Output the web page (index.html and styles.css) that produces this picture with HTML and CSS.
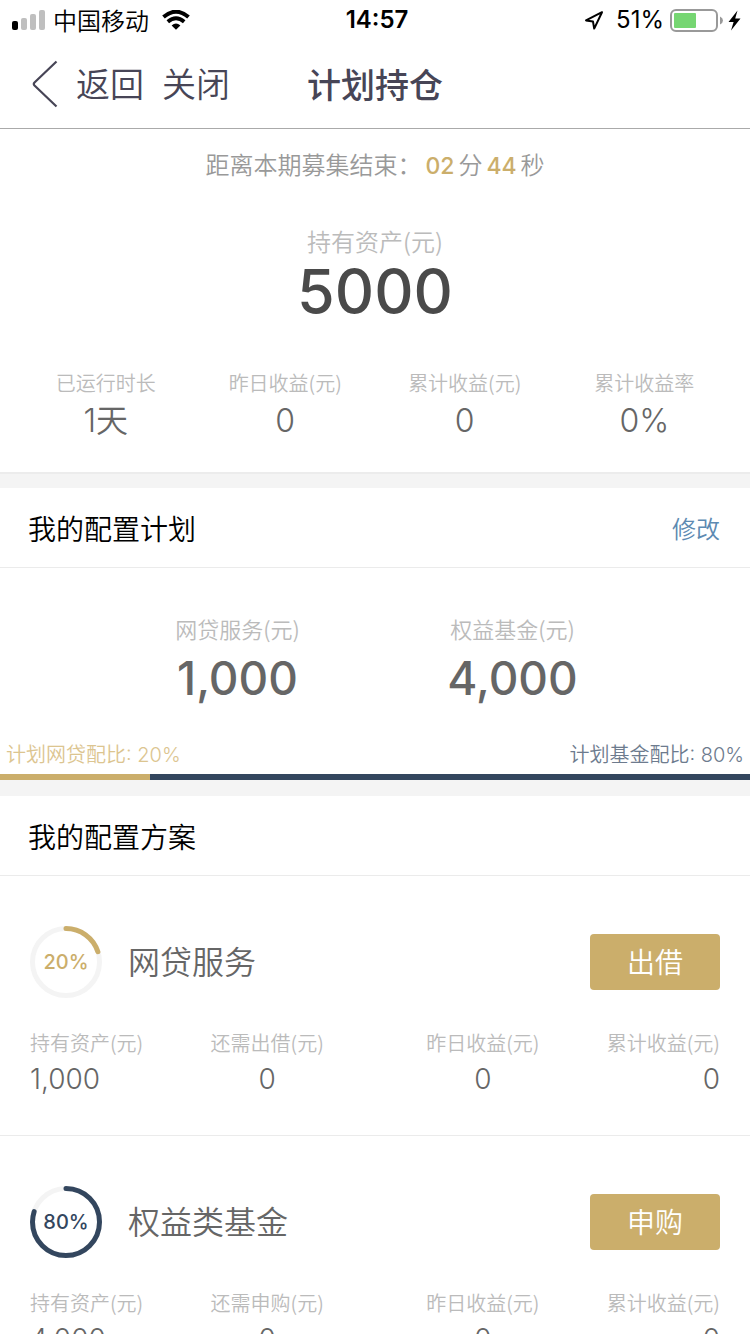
FILE: index.html
```html
<!DOCTYPE html>
<html lang="zh-CN">
<head>
<meta charset="utf-8">
<meta name="viewport" content="width=device-width, initial-scale=1">
<title>计划持仓</title>
<link rel="stylesheet" href="styles.css">
</head>
<body>
<div class="app">
  <div class="status">
    <div class="status-left">
      <svg class="signal" width="34" height="20" viewBox="0 0 34 20" aria-hidden="true">
        <rect x="0" y="11" width="6" height="9" rx="2" fill="#000"/>
        <rect x="9" y="8" width="6" height="12" rx="2" fill="#bfbfbf"/>
        <rect x="18" y="4" width="6" height="16" rx="2" fill="#bfbfbf"/>
        <rect x="27" y="0" width="6" height="20" rx="2" fill="#bfbfbf"/>
      </svg>
      <span>中国移动</span>
      <svg class="wifi" width="28" height="20" viewBox="0 0 28 20" aria-hidden="true">
        <path d="M1.500 7 Q14 -3.600 26.500 7" fill="none" stroke="#000" stroke-width="4"/>
        <path d="M5.800 11.800 Q14 4.800 22.200 11.800" fill="none" stroke="#000" stroke-width="3.800"/>
        <path d="M9.600 15.400 Q14 11.800 18.400 15.400 L14 19.800 Z" fill="#000"/>
      </svg>
    </div>
    <time class="clock">14:57</time>
    <div class="status-right">
      <svg width="20" height="20" viewBox="0 0 20 20" aria-hidden="true">
        <path d="M18 2.200 L2 10.400 L9 11.600 L10.200 18.600 Z" fill="none" stroke="#000" stroke-width="2" stroke-linejoin="round"/>
      </svg>
      <span class="percent">51%</span>
      <svg width="72" height="24" viewBox="0 0 72 24" aria-hidden="true">
        <rect x="1" y="2" width="46" height="21" rx="5" fill="none" stroke="#999" stroke-width="2"/>
        <rect x="4" y="5" width="22" height="15" rx="1" fill="#76d672"/>
        <path d="M50 8.500 Q53 10 53 12.500 Q53 15 50 16.500 Z" fill="#999"/>
        <path d="M67.500 2.500 L58.500 14 L63.600 14 L61 22.500 L70.500 10.600 L65.200 10.600 Z" fill="#000"/>
      </svg>
    </div>
  </div>

  <header class="nav">
    <div class="nav-left">
      <button class="nav-btn" type="button">
        <svg width="28" height="48" viewBox="0 0 28 48" aria-hidden="true">
          <path d="M26.500 1.500 L4.500 22.500 Q3 24 4.500 25.500 L26.500 46.500" fill="none" stroke="#474556" stroke-width="2.200"/>
        </svg>
        <span class="nav-text">返回</span>
      </button>
      <button class="nav-btn" type="button"><span class="nav-text">关闭</span></button>
    </div>
    <h1 class="nav-title">计划持仓</h1>
  </header>

  <main class="content">
    <section class="overview">
      <p class="countdown">距离本期募集结束：<b class="time">02</b>分<b class="time">44</b>秒</p>
      <p class="asset-label">持有资产(元)</p>
      <p class="asset-value">5000</p>
      <dl class="stats">
        <div class="stat"><dt>已运行时长</dt><dd>1天</dd></div>
        <div class="stat"><dt>昨日收益(元)</dt><dd>0</dd></div>
        <div class="stat"><dt>累计收益(元)</dt><dd>0</dd></div>
        <div class="stat"><dt>累计收益率</dt><dd>0%</dd></div>
      </dl>
    </section>

    <section class="panel">
      <div class="panel-head">
        <h2>我的配置计划</h2>
        <a class="edit" href="#">修改</a>
      </div>
      <dl class="plan">
        <div class="plan-item"><dt>网贷服务(元)</dt><dd>1,000</dd></div>
        <div class="plan-item"><dt>权益基金(元)</dt><dd>4,000</dd></div>
      </dl>
      <div class="ratio-labels">
        <span class="ratio-loan">计划网贷配比: 20%</span>
        <span class="ratio-fund">计划基金配比: 80%</span>
      </div>
      <div class="ratio-bar"><div class="ratio-fill" style="width:20%"></div></div>
    </section>

    <section class="panel">
      <div class="panel-head">
        <h2>我的配置方案</h2>
      </div>
      <article class="product">
        <div class="product-head">
          <div class="ring ring-loan">
            <svg width="72" height="72" viewBox="0 0 72 72" aria-hidden="true">
              <circle class="ring-track" cx="36" cy="36" r="33.500"/>
              <circle class="ring-arc" cx="36" cy="36" r="33.500" pathLength="100" stroke-dasharray="20 80" transform="rotate(-90 36 36)"/>
            </svg>
            <span class="ring-text">20%</span>
          </div>
          <h3>网贷服务</h3>
          <button class="action" type="button">出借</button>
        </div>
        <dl class="figures">
          <div class="figure"><dt>持有资产(元)</dt><dd>1,000</dd></div>
          <div class="figure"><dt>还需出借(元)</dt><dd>0</dd></div>
          <div class="figure"><dt>昨日收益(元)</dt><dd>0</dd></div>
          <div class="figure"><dt>累计收益(元)</dt><dd>0</dd></div>
        </dl>
      </article>
      <article class="product">
        <div class="product-head">
          <div class="ring ring-fund">
            <svg width="72" height="72" viewBox="0 0 72 72" aria-hidden="true">
              <circle class="ring-track" cx="36" cy="36" r="33.500"/>
              <circle class="ring-arc" cx="36" cy="36" r="33.500" pathLength="100" stroke-dasharray="80 20" transform="rotate(-90 36 36)"/>
            </svg>
            <span class="ring-text">80%</span>
          </div>
          <h3>权益类基金</h3>
          <button class="action" type="button">申购</button>
        </div>
        <dl class="figures">
          <div class="figure"><dt>持有资产(元)</dt><dd>4,000</dd></div>
          <div class="figure"><dt>还需申购(元)</dt><dd>0</dd></div>
          <div class="figure"><dt>昨日收益(元)</dt><dd>0</dd></div>
          <div class="figure"><dt>累计收益(元)</dt><dd>0</dd></div>
        </dl>
      </article>
    </section>
  </main>
</div>
</body>
</html>
```

FILE: styles.css
```css
:root {
  --gold: #cbae6b;
  --navy: #33465e;
  --ink: #474556;
  --text: #666;
  --label: #bbb;
  --line: #ebebeb;
  --cjk: "Noto Sans CJK SC", sans-serif;
  --num: Inter, "Noto Sans CJK SC", sans-serif;
}

* { box-sizing: border-box; }

body, h1, h2, h3, p, dl, dd { margin: 0; }

body {
  font-family: var(--cjk);
  font-weight: 350;
  background: #fff;
  color: var(--text);
}

button {
  font: inherit;
  color: inherit;
  border: 0;
  background: none;
  padding: 0;
  cursor: pointer;
}

.app {
  display: flex;
  flex-direction: column;
  height: 100vh;
}

/* Status bar */
.status {
  display: grid;
  grid-template-columns: 1fr auto 1fr;
  align-items: center;
  flex: none;
  height: 40px;
  padding: 0 8px 0 12px;
  color: #000;
  font-size: 24px;
  line-height: 40px;
}

.status-left, .status-right {
  display: flex;
  align-items: center;
}

.status-left { gap: 7px; }
.wifi { margin-left: 6px; }
.status-right { justify-content: flex-end; gap: 6px; }
.clock { font-family: var(--num); font-size: 24px; font-weight: 600; }
.percent { font-family: var(--num); font-size: 24px; font-weight: 400; margin-left: 6px; }

/* Navigation */
.nav {
  display: grid;
  grid-template-columns: 1fr auto 1fr;
  align-items: center;
  flex: none;
  height: 89px;
  padding: 0 30px;
  border-bottom: 1px solid #aaa;
  color: var(--ink);
}

.nav-left { display: flex; gap: 18px; }

.nav-btn {
  display: flex;
  align-items: center;
  gap: 18px;
  font-size: 34px;
  line-height: 48px;
}

.nav-text, .nav-title { padding-bottom: 2px; }
.nav-title { font-size: 34px; font-weight: 500; }

/* Scrolling content */
.content {
  flex: 1;
  overflow-y: auto;
  scrollbar-width: none;
  background: #f4f4f4;
}

.overview {
  padding: 19px 16px 27px;
  background: #fff;
  border-bottom: 2px solid #ececec;
  text-align: center;
}

.countdown {
  color: #999;
  font-size: 24px;
  line-height: 32px;
}

.time {
  margin: 0 4px;
  color: var(--gold);
  font-family: var(--num);
  font-size: 23px;
  font-weight: 500;
}

.asset-label {
  margin-top: 43px;
  color: var(--label);
  font-size: 24px;
  line-height: 32px;
}

.asset-value {
  color: #4a4a4a;
  font-family: var(--num);
  font-size: 61px;
  font-weight: 500;
  line-height: 68px;
}

.stats {
  display: grid;
  grid-template-columns: repeat(4, 1fr);
  margin-top: 44px;
}

.stat dt {
  color: var(--label);
  font-size: 20px;
  line-height: 28px;
}

.stat dd {
  font-family: var(--num);
  font-size: 32px;
  line-height: 48px;
}

/* Panels */
.panel { background: #fff; }
.overview + .panel { margin-top: 14px; }
.panel + .panel { margin-top: 16px; }

.panel-head {
  display: flex;
  align-items: center;
  justify-content: space-between;
  height: 80px;
  padding: 0 30px 0 28px;
  border-bottom: 1px solid var(--line);
}

.panel-head h2 {
  color: #000;
  font-size: 28px;
  font-weight: 350;
}

.edit {
  color: #5d8ab2;
  font-size: 24px;
  text-decoration: none;
}

.plan {
  display: grid;
  grid-template-columns: repeat(2, 1fr);
  padding: 44px 100px 30px;
  text-align: center;
}

.plan-item dt {
  color: var(--label);
  font-size: 22px;
  line-height: 32px;
}

.plan-item dd {
  margin-top: 3px;
  font-family: var(--num);
  font-size: 46px;
  font-weight: 500;
  line-height: 62px;
}

.ratio-labels {
  display: flex;
  justify-content: space-between;
  padding: 0 6px 3px;
  font-family: var(--num);
  font-size: 20px;
  line-height: 32px;
}

.ratio-loan { color: #dcc590; }
.ratio-fund { color: #6d7b8e; }

.ratio-bar {
  height: 6px;
  background: var(--navy);
}

.ratio-fill {
  height: 100%;
  background: var(--gold);
}

/* Products */
.product {
  padding: 50px 30px 36px;
  border-bottom: 1px solid var(--line);
}

.product-head {
  display: flex;
  align-items: center;
}

.ring {
  display: grid;
  place-items: center;
  margin-right: 26px;
}

.ring > * { grid-area: 1 / 1; }
.ring-loan { color: var(--gold); }
.ring-fund { color: var(--navy); }

.ring circle {
  fill: none;
  stroke-width: 5;
}

.ring-track { stroke: #f4f4f4; }
.ring-arc { stroke: currentColor; stroke-linecap: round; }

.ring-text {
  font-family: var(--num);
  font-size: 20px;
  font-weight: 500;
}

.product h3 {
  flex: 1;
  padding-bottom: 5px;
  font-size: 32px;
  font-weight: 350;
}

.action {
  width: 130px;
  height: 56px;
  padding-bottom: 2px;
  border-radius: 4px;
  background: var(--gold);
  color: #fff;
  font-size: 28px;
}

.figures {
  display: grid;
  grid-template-columns: 3fr 5fr 5fr 3fr;
  margin-top: 31px;
  text-align: center;
  white-space: nowrap;
}

.figure:first-child { text-align: left; }
.figure:last-child { text-align: right; }

.figure dt {
  color: var(--label);
  font-size: 20px;
  line-height: 28px;
}

.figure dd {
  margin-top: 2px;
  font-family: var(--num);
  font-size: 28px;
  line-height: 40px;
}
```
